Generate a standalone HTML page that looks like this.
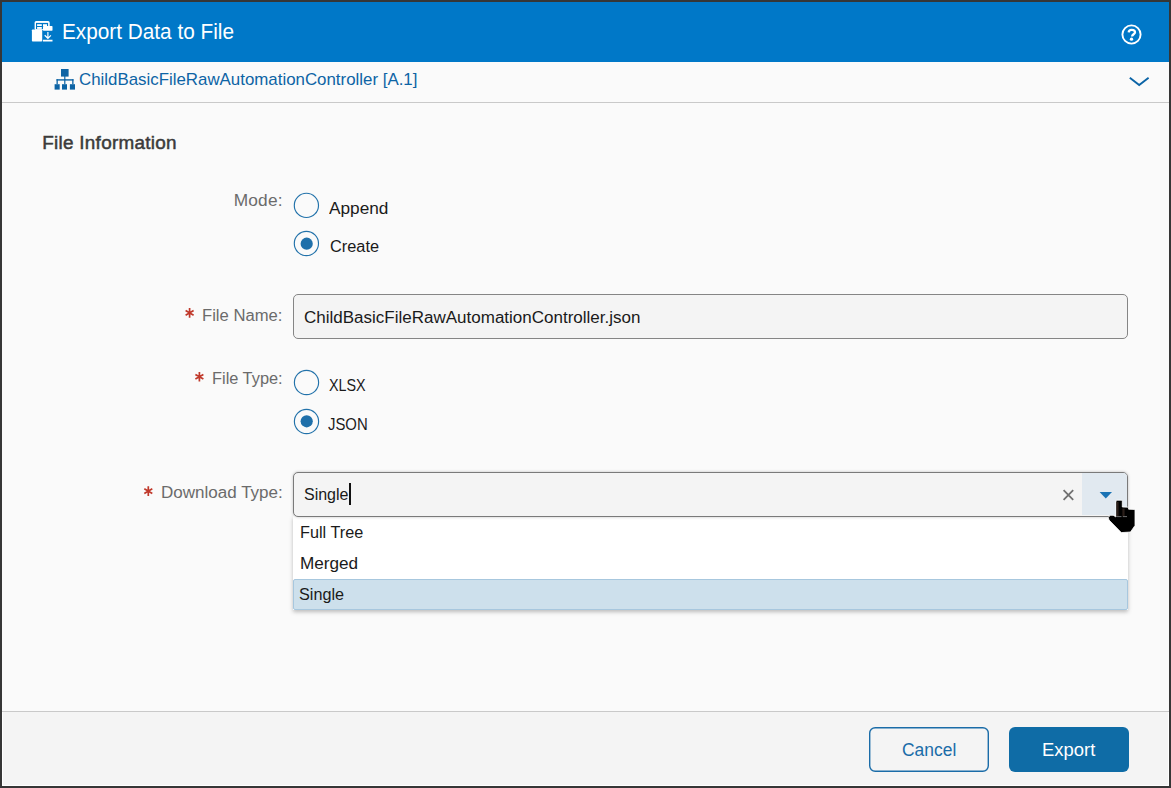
<!DOCTYPE html>
<html><head><meta charset="utf-8"><style>
html,body{margin:0;padding:0;}
body{width:1171px;height:788px;position:relative;overflow:hidden;background:#363636;font-family:"Liberation Sans",sans-serif;}
.a{position:absolute;}
.t{position:absolute;white-space:nowrap;line-height:40px;height:40px;}
</style></head><body>
<div class="a" style="left:2px;top:2px;width:1167px;height:784px;background:#fafafa;"></div>
<div class="a" style="left:2px;top:2px;width:1167px;height:60px;background:#0078c8;"></div>
<div class="a" style="left:2px;top:102px;width:1167px;height:1px;background:#c9c9c9;"></div>
<div class="a" style="left:2px;top:711px;width:1167px;height:1px;background:#c9c9c9;"></div>
<div class="a" style="left:2px;top:712px;width:1167px;height:74px;background:#ffffff;"></div>
<div class="a" style="left:3px;top:712px;width:1165px;height:73px;background:#f4f4f4;"></div>

<!-- header icon -->
<svg class="a" style="left:0;top:0" width="1171" height="110">
  <rect x="34.6" y="21.1" width="15.1" height="9" rx="1.6" fill="#fff"/>
  <rect x="36" y="22.9" width="12.1" height="6.3" fill="#0078c8"/>
  <g fill="#ffffff">
    <rect x="37.1" y="24.2" width="4.7" height="1.8"/>
    <rect x="43" y="24.2" width="4" height="1.8"/>
    <rect x="37.1" y="27" width="4.7" height="1.9"/>
    <rect x="31.9" y="29.5" width="10.3" height="12" rx="0.8"/>
    <rect x="43" y="26.1" width="9.5" height="4.6" rx="0.6"/>
    <rect x="42.9" y="39.75" width="9.6" height="1.75"/>
  </g>
  <path d="M47.9 31.9 V38 M44.7 35.3 L47.9 38.3 L50.9 35.3" stroke="#fff" stroke-width="1.2" fill="none"/>
  <!-- help icon -->
  <circle cx="1131.5" cy="34.5" r="9.1" stroke="#fff" stroke-width="1.9" fill="none"/>
  <path d="M1128.7 32.4 C1128.8 30.5 1130.1 29.9 1131.7 29.9 C1133.6 29.9 1135 30.8 1135 32.3 C1135 34.2 1132.1 34.3 1132.1 36.4" stroke="#fff" stroke-width="2.3" fill="none"/>
  <circle cx="1131.5" cy="39.2" r="1.65" fill="#fff"/>
  <!-- hierarchy icon -->
  <g fill="#0d64a5">
    <rect x="61" y="69" width="7.6" height="7.6"/>
    <rect x="64.2" y="76" width="1.2" height="4"/>
    <rect x="56.5" y="79.2" width="17" height="1.4"/>
    <rect x="56.5" y="79.2" width="1.3" height="5"/>
    <rect x="64.2" y="79.2" width="1.2" height="5"/>
    <rect x="72.2" y="79.2" width="1.3" height="5"/>
    <rect x="54.6" y="84.2" width="5.1" height="5.4"/>
    <rect x="62" y="84.2" width="5" height="5.4"/>
    <rect x="69.9" y="84.2" width="5.1" height="5.4"/>
  </g>
  <!-- chevron -->
  <path d="M1129.8 77.8 L1139.2 85 L1148.6 77.8" stroke="#0b64a6" stroke-width="1.9" fill="none"/>
</svg>

<!-- radios -->
<svg class="a" style="left:0;top:150px" width="400" height="300" viewBox="0 150 400 300">
  <circle cx="306.4" cy="205.4" r="12.1" fill="none" stroke="#2272aa" stroke-width="1.15"/>
  <circle cx="306.4" cy="243.5" r="12.1" fill="none" stroke="#2272aa" stroke-width="1.15"/>
  <circle cx="306.7" cy="243.7" r="6.1" fill="#1f70aa"/>
  <circle cx="306.5" cy="382.5" r="12.1" fill="none" stroke="#2272aa" stroke-width="1.15"/>
  <circle cx="306.5" cy="421.5" r="12.1" fill="none" stroke="#2272aa" stroke-width="1.15"/>
  <circle cx="306.7" cy="421.3" r="6.1" fill="#1f70aa"/>

</svg>

<!-- file name input -->
<div class="a" style="left:293px;top:294px;width:833px;height:43px;border:1px solid #858585;border-radius:5px;background:#f4f4f4;"></div>

<!-- download type input + dropdown -->
<div class="a" style="left:293px;top:516px;width:835px;height:94px;background:#ffffff;box-shadow:0 2px 4px rgba(0,0,0,0.25);"></div>
<div class="a" style="left:293px;top:579px;width:833px;height:29px;background:#cde0ec;border:1px solid #a7c7de;border-radius:2px;"></div>
<div class="a" style="left:293px;top:472px;width:833px;height:43px;border:1px solid #7a7a7a;border-radius:5px;background:#f4f4f4;box-shadow:0 0 3px rgba(0,0,0,0.25);"></div>
<div class="a" style="left:1082px;top:473px;width:45px;height:42px;background:#e1e9f0;border-radius:0 4px 0 0;"></div>
<div class="a" style="left:349.2px;top:483px;width:1.6px;height:22px;background:#111;"></div>
<svg class="a" style="left:1050px;top:480px" width="90" height="60" viewBox="1050 480 90 60">
  <path d="M1063.6 490.2 L1073.2 499.8 M1073.2 490.2 L1063.6 499.8" stroke="#707070" stroke-width="1.8"/>
  <path d="M1099.6 492 L1112 492 L1105.8 498.4 Z" fill="#1a73b4"/>
  <path d="M1116 501 Q1116 500.2 1117 500.2 L1121.3 500.2 Q1122.3 500.2 1122.3 501.2 L1122.3 507 L1128.4 507.2 L1128.6 509.2 L1134.2 509.4 L1135 510.5 L1135 525.5 L1130.5 532 L1121.3 532.6 L1109 520 L1108.3 517.5 L1110.2 515.3 L1113.2 515.3 L1116 517 Z" fill="#000" stroke="#fff" stroke-width="0.8"/><path d="M1117.5 502 V516 M1123.5 508.5 V516" stroke="#2b1f1a" stroke-width="2.2"/><path d="M1117 516.6 H1121.5 M1122.8 516.6 H1127" stroke="#8a8a8a" stroke-width="0.8"/>
</svg>

<!-- asterisks -->
<svg class="a" style="left:0;top:0" width="300" height="520">
  <g stroke="#c0392b" stroke-width="1.7" fill="none">
    <path d="M189.6 308.1 V317.7 M185.6 310.6 L193.6 315.2 M193.6 310.6 L185.6 315.2"/>
    <path d="M199.4 371.9 V381.5 M195.4 374.4 L203.4 379 M203.4 374.4 L195.4 379"/>
    <path d="M148.3 486.3 V495.9 M144.3 488.8 L152.3 493.4 M152.3 488.8 L144.3 493.4"/>
  </g>
</svg>

<!-- footer buttons -->
<svg class="a" style="left:860px;top:720px" width="140" height="60" viewBox="860 720 140 60"><rect x="869.7" y="727.7" width="118.6" height="43.6" rx="5.5" fill="none" stroke="#1a6ca8" stroke-width="1.4"/></svg>
<div class="a" style="left:1009px;top:727px;width:120px;height:45px;background:#0f6ca6;border-radius:6px;"></div>

<div class="t" style="left:61.70px;top:11px;font-size:22.00px;line-height:41px;letter-spacing:0.000px;color:#ffffff;transform:scaleX(0.9441);transform-origin:0 0;">Export Data to File</div>
<div class="t" style="left:79.20px;top:59px;font-size:17.00px;line-height:41px;letter-spacing:0.000px;color:#0d64a5;transform:scaleX(0.9921);transform-origin:0 0;">ChildBasicFileRawAutomationController [A.1]</div>
<div class="t" style="left:42.20px;top:122px;font-size:18.90px;line-height:41px;letter-spacing:0.283px;color:#3b3b3b;-webkit-text-stroke:0.5px #3b3b3b;">File Information</div>
<div class="t" style="left:233.70px;top:180px;font-size:17.30px;line-height:40px;letter-spacing:0.206px;color:#6b6b6b;">Mode:</div>
<div class="t" style="left:329.00px;top:188px;font-size:17.30px;line-height:40px;letter-spacing:0.000px;color:#1a1a1a;transform:scaleX(0.9975);transform-origin:0 0;">Append</div>
<div class="t" style="left:329.50px;top:226px;font-size:17.30px;line-height:40px;letter-spacing:0.000px;color:#1a1a1a;transform:scaleX(0.9457);transform-origin:0 0;">Create</div>
<div class="t" style="left:201.75px;top:295px;font-size:17.30px;line-height:40px;letter-spacing:0.000px;color:#6b6b6b;transform:scaleX(0.9618);transform-origin:0 0;">File Name:</div>
<div class="t" style="left:304.40px;top:297px;font-size:17.30px;line-height:40px;letter-spacing:0.000px;color:#1a1a1a;transform:scaleX(0.9839);transform-origin:0 0;">ChildBasicFileRawAutomationController.json</div>
<div class="t" style="left:212.00px;top:358px;font-size:17.30px;line-height:40px;letter-spacing:0.000px;color:#6b6b6b;transform:scaleX(0.9467);transform-origin:0 0;">File Type:</div>
<div class="t" style="left:328.70px;top:365px;font-size:17.30px;line-height:40px;letter-spacing:0.000px;color:#1a1a1a;transform:scaleX(0.8296);transform-origin:0 0;">XLSX</div>
<div class="t" style="left:327.50px;top:404px;font-size:17.30px;line-height:40px;letter-spacing:0.000px;color:#1a1a1a;transform:scaleX(0.8604);transform-origin:0 0;">JSON</div>
<div class="t" style="left:160.80px;top:472px;font-size:17.30px;line-height:40px;letter-spacing:0.000px;color:#6b6b6b;transform:scaleX(0.9851);transform-origin:0 0;">Download Type:</div>
<div class="t" style="left:304.00px;top:474px;font-size:17.30px;line-height:40px;letter-spacing:0.000px;color:#1a1a1a;transform:scaleX(0.9253);transform-origin:0 0;">Single</div>
<div class="t" style="left:299.50px;top:512px;font-size:17.30px;line-height:40px;letter-spacing:0.000px;color:#1a1a1a;transform:scaleX(0.9406);transform-origin:0 0;">Full Tree</div>
<div class="t" style="left:299.70px;top:543px;font-size:17.30px;line-height:40px;letter-spacing:0.000px;color:#1a1a1a;transform:scaleX(0.9921);transform-origin:0 0;">Merged</div>
<div class="t" style="left:299.00px;top:574px;font-size:17.30px;line-height:40px;letter-spacing:0.000px;color:#1a1a1a;transform:scaleX(0.9377);transform-origin:0 0;">Single</div>
<div class="t" style="left:902.20px;top:729px;font-size:18.90px;line-height:41px;letter-spacing:0.000px;color:#1a6ca8;transform:scaleX(0.9229);transform-origin:0 0;">Cancel</div>
<div class="t" style="left:1041.65px;top:729px;font-size:18.90px;line-height:41px;letter-spacing:0.000px;color:#ffffff;transform:scaleX(0.9758);transform-origin:0 0;">Export</div>
</body></html>
